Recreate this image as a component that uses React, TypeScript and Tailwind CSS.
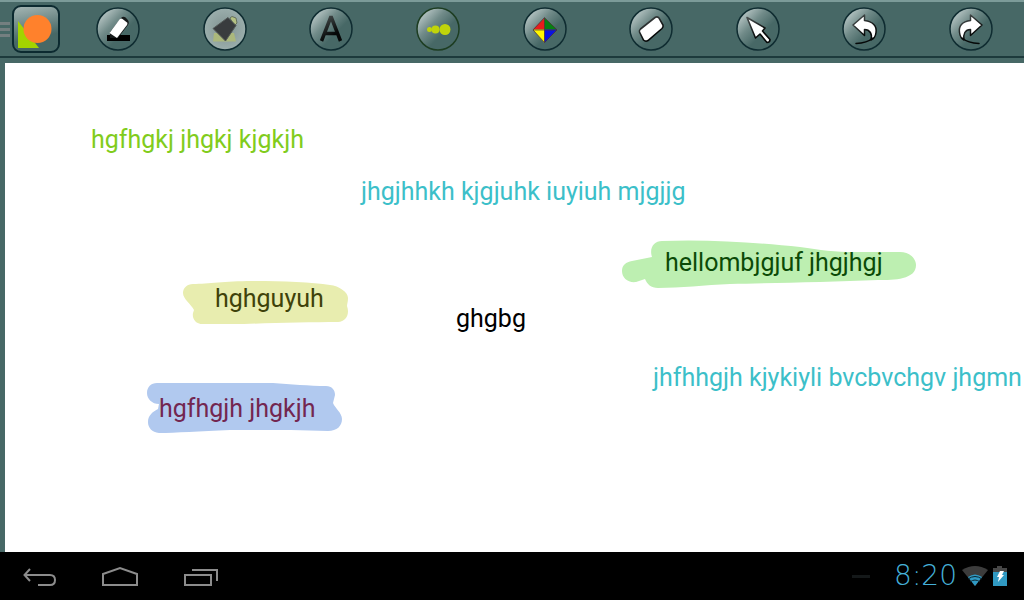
import type { ReactNode } from "react";
import clsx from "clsx";

type Tool = {
  name: string;
  ring?: string;
  muted?: boolean;
  icon: ReactNode;
};

const tools: Tool[] = [
  {
    name: "Marker",
    icon: (
      <>
        <path d="M11 28 H34 V34 H11Z" fill="#000" />
        <path d="M14 25 L25 11 Q28 8 31 12 Q34 15 32 18 L22 31 L14 31Z" fill="#161a1a" />
        <path d="M13.500 26 L23.500 12.500 Q25 11 26.500 12 L31 15.500 Q32 16.500 31 18 L21 31Z" fill="#fff" />
      </>
    ),
  },
  {
    name: "Highlighter",
    muted: true,
    icon: (
      <>
        <path d="M10 34.500 L11 26 H31 L33 34.500Z" fill="#abb87c" />
        <path d="M27 11 L29 9.500 L33 11 L34 16 L31 19Z" fill="#b4c183" stroke="#56604c" strokeWidth="0.800" />
        <path d="M10 21.500 L25 10.500 L33 18.500 L22.500 34Z" fill="#393c3e" stroke="#535a58" strokeWidth="1" strokeLinejoin="round" />
      </>
    ),
  },
  {
    name: "Text",
    icon: (
      <path
        d="M12.500 34 L22 9.500 L31.500 34 M15 26.500 H29"
        fill="none"
        stroke="url(#ink)"
        strokeWidth="3.500"
        strokeLinejoin="bevel"
      />
    ),
  },
  {
    name: "Brush size",
    ring: "#1d3d22",
    icon: (
      <g fill="#c0d40a">
        <circle cx="13.500" cy="22.500" r="2.500" />
        <circle cx="19.500" cy="22.500" r="4" />
        <circle cx="29" cy="22.500" r="5.500" />
      </g>
    ),
  },
  {
    name: "Color",
    icon: (
      <>
        <path d="M21.500 11 V22.500 H10Z" fill="#e81c1c" />
        <path d="M21.500 11 V22.500 H34Z" fill="#078013" />
        <path d="M21.500 36 V22.500 H10Z" fill="#fff600" />
        <path d="M21.500 36 V22.500 H34Z" fill="#0a12e0" />
        <path d="M21.500 10.500 L34 23 L21.500 35.500 L10 23Z M10 23 H34 M21.500 11 V35.500" fill="none" stroke="#4b3030" strokeWidth="0.700" />
      </>
    ),
  },
  {
    name: "Eraser",
    icon: (
      <path
        d="M11.500 22 L26 10.500 Q28 9 30 11 L34 18 Q34.500 20 33 21.500 L19 33.500 Q16.500 35 14.500 33 L10.500 25 Q10 23.500 11.500 22Z"
        fill="#fff"
        stroke="url(#ink)"
        strokeWidth="1.600"
      />
    ),
  },
  {
    name: "Select",
    icon: (
      <path
        d="M11 10.500 L29 21 L26.500 24 L34 32.500 Q34 35.500 31 35.500 L24 27 L19.500 31Z"
        fill="#fff"
        stroke="url(#ink)"
        strokeWidth="1.600"
        strokeLinejoin="round"
      />
    ),
  },
  {
    name: "Undo",
    icon: (
      <>
        <path
          d="M11 18 L22.500 8 V13.500 C31 14.500 35 19 34 25.500 C33.500 29.500 32 32 29 33 C30.500 27 28 22.500 22.500 22.500 V28.500Z"
          fill="#fff"
          stroke="url(#ink)"
          strokeWidth="1.500"
          strokeLinejoin="round"
        />
        <path d="M14 36.500 Q25 36 31 31" fill="none" stroke="#050808" strokeWidth="1.500" strokeLinecap="round" />
      </>
    ),
  },
  {
    name: "Redo",
    icon: (
      <>
        <path
          d="M33 18 L21.500 8 V13.500 C13 14.500 9.500 19 10.500 25.500 C11 29.500 12.500 32 15 33 C14 27 16 22.500 21.500 22.500 V28.500Z"
          fill="#fff"
          stroke="url(#ink)"
          strokeWidth="1.500"
          strokeLinejoin="round"
        />
        <path d="M30 36.500 Q19 36 13 31" fill="none" stroke="#050808" strokeWidth="1.500" strokeLinecap="round" />
      </>
    ),
  },
];

const strokes = [
  {
    id: "yellow",
    box: "left-[177px] top-[217px] h-12 w-44",
    view: "0 0 176 48",
    fill: "#e8edaf",
    d: "M1 13 C1 8 5 4 11 4 C27 4 42 1 70 1 C100 1 130 2 148 5 C157 6 166 12 166 18 C166 22 165 24 165 26 C168 34 164 42 156 42 C130 42 90 43 62 44 L21 44 C13 44 10 38 11 33 L12 30 C9 24 1 19 1 13Z",
  },
  {
    id: "blue",
    box: "left-[140px] top-[317px] h-14 w-52",
    view: "0 0 208 56",
    fill: "#b1c9ef",
    d: "M2 13 C2 7 6 3 12 3 L128 3 C145 4 165 6 181 6 C187 6 190 10 190 15 L188 23 C190 28 197 33 197 39 C197 46 192 51 183 51 C150 50 110 50 85 50 C55 51 30 53 14 53 C7 52 3 48 3 42 C3 36 7 32 13 29 L14 24 C7 24 2 19 2 13Z",
  },
  {
    id: "green",
    box: "left-[615px] top-[175px] h-13 w-75",
    view: "0 0 300 52",
    fill: "#bdefb1",
    d: "M2 33 C2 27 6 24 12 23 L32 19 C29 10 34 3 42 3 C90 1 140 5 180 9 C200 12 215 14 235 14 L280 14 C289 14 296 20 296 27 C296 34 291 38 283 40 C276 42 266 42 258 42 C210 44 150 45 110 46 C85 47 60 50 38 50 C31 50 27 46 25 41 L16 44 C8 45 2 40 2 33Z",
  },
];

const notes = [
  { text: "hgfhgkj jhgkj kjgkjh", className: "left-[86px] top-[61px] text-[#81cc1c]" },
  { text: "jhgjhhkh kjgjuhk iuyiuh mjgjjg", className: "left-[356px] top-[113px] text-[#3cbfc9]" },
  { text: "hellombjgjuf jhgjhgj", className: "left-[660px] top-[184px] text-[#0b4a07]" },
  { text: "hghguyuh", className: "left-[210px] top-[220px] text-[#3f420a]" },
  { text: "ghgbg", className: "left-[451px] top-[240px] text-black" },
  { text: "hgfhgjh jhgkjh", className: "left-[154px] top-[330px] text-[#732650]" },
  { text: "jhfhhgjh kjykiyli bvcbvchgv jhgmn", className: "left-[648px] top-[299px] text-[#3cbfc9]" },
];

function ToolButton({ tool }: { tool: Tool }) {
  return (
    <button type="button" aria-label={tool.name} className="size-11 shrink-0 cursor-pointer">
      <svg viewBox="0 0 44 44" className="size-11">
        <circle
          cx="22"
          cy="22"
          r="21"
          fill={tool.muted ? "url(#muted)" : "url(#gloss)"}
          stroke={tool.ring ?? "#0f2c31"}
          strokeWidth="1.500"
        />
        {tool.icon}
      </svg>
    </button>
  );
}

function Toolbar() {
  return (
    <header className="flex h-[58px] shrink-0 items-center border-t-2 border-b-2 border-t-[#7c9b99] border-b-[#1d3a3c] bg-[#476866]">
      <svg className="absolute size-0" aria-hidden="true">
        <defs>
          <linearGradient id="gloss" x1="0.120" y1="0.150" x2="0.600" y2="0.620">
            <stop offset="0" stopColor="#b4c3c2" />
            <stop offset="0.500" stopColor="#718b89" />
            <stop offset="1" stopColor="#476866" />
          </linearGradient>
          <radialGradient id="muted">
            <stop offset="0" stopColor="#7f9190" />
            <stop offset="1" stopColor="#9baeac" />
          </radialGradient>
          <linearGradient id="ink" gradientUnits="userSpaceOnUse" x1="12" y1="8" x2="24" y2="28">
            <stop offset="0" stopColor="#4d5454" />
            <stop offset="1" stopColor="#050808" />
          </linearGradient>
          <linearGradient id="tile" x1="0.300" y1="0" x2="0.450" y2="0.700">
            <stop offset="0" stopColor="#a0b2b0" />
            <stop offset="1" stopColor="#476866" />
          </linearGradient>
        </defs>
      </svg>
      <div className="flex w-3 flex-col gap-[3px]">
        <span className="h-[3px] w-[10px] bg-[#747f80]" />
        <span className="h-[3px] w-[10px] bg-[#747f80]" />
        <span className="h-[3px] w-[10px] bg-[#747f80]" />
      </div>
      <button type="button" aria-label="Menu" className="size-12 shrink-0 cursor-pointer">
        <svg viewBox="0 0 48 48" className="size-12">
          <rect x="1" y="1" width="46" height="46" rx="8" fill="url(#tile)" stroke="#0c2a30" strokeWidth="2" />
          <path d="M6 16 L27 43 H6Z" fill="#a3d400" />
          <circle cx="25.500" cy="24" r="14" fill="#ff812c" />
        </svg>
      </button>
      <nav aria-label="Tools" className="mr-[31px] ml-9 flex flex-1 justify-between">
        {tools.map((tool) => (
          <ToolButton key={tool.name} tool={tool} />
        ))}
      </nav>
    </header>
  );
}

function Board() {
  return (
    <main className="relative mt-[5px] ml-[5px] flex-1 overflow-hidden bg-white">
      {strokes.map((stroke) => (
        <svg key={stroke.id} viewBox={stroke.view} className={clsx("absolute", stroke.box)}>
          <path d={stroke.d} fill={stroke.fill} />
        </svg>
      ))}
      {notes.map((note) => (
        <p key={note.text} className={clsx("absolute whitespace-nowrap text-[25px] leading-8", note.className)}>
          {note.text}
        </p>
      ))}
    </main>
  );
}

function SystemBar() {
  return (
    <footer className="flex h-12 shrink-0 items-center justify-between bg-black pr-[17px] pl-5">
      <div className="flex">
        <button type="button" aria-label="Back" className="mr-10 h-12 w-10 cursor-pointer">
          <svg viewBox="0 0 40 48" className="h-12 w-10" fill="none" stroke="#8c8c8c" strokeWidth="2">
            <path d="M10 17 L4.500 23 L10 29 M5 23 H30 Q35 23 35 28 Q35 33 30 33 H18" />
          </svg>
        </button>
        <button type="button" aria-label="Home" className="mr-10 h-12 w-10 cursor-pointer">
          <svg viewBox="0 0 40 48" className="h-12 w-10" fill="none" stroke="#8c8c8c" strokeWidth="2">
            <path d="M3 33 V22 L20 16 L37 22 V33Z" />
          </svg>
        </button>
        <button type="button" aria-label="Recent apps" className="h-12 w-10 cursor-pointer">
          <svg viewBox="0 0 40 48" className="h-12 w-10" fill="none" stroke="#8c8c8c" strokeWidth="2">
            <path d="M5 23 H31 V33 H5Z M12 18 H37 V29" />
          </svg>
        </button>
      </div>
      <div className="flex items-center">
        <span className="mr-6 h-[3px] w-[18px] bg-[#141819]" />
        <time className="font-['DejaVu_Sans',sans-serif] text-[28px] leading-8 font-extralight text-[#45b0d8]">8:20</time>
        <svg viewBox="0 0 28 20" className="ml-1 h-5 w-7" aria-label="Wi-Fi">
          <path d="M1 4 Q14 -4 27 4 L14 20Z" fill="#3c3c3c" />
          <path d="M7 11 Q14 6 21 11 L14 20Z" fill="#2f9ac4" />
          <path d="M7 13 Q14 8 21 13 M9 16 Q14 12 19 16" fill="none" stroke="#0a2530" strokeWidth="1" />
        </svg>
        <svg viewBox="0 0 14 20" className="ml-1 h-5 w-[14px]" aria-label="Battery charging">
          <path d="M0 2 H4 V0 H9 V2 H14 V6 H0Z" fill="#474747" />
          <rect y="6" width="14" height="14" fill="#3099c2" />
          <path d="M7 5 L11 5 L9 9 H11 L5 16 L6 11 H4Z" fill="#fff" />
        </svg>
      </div>
    </footer>
  );
}

export default function App() {
  return (
    <div className="flex h-screen flex-col overflow-hidden bg-[#476866] font-[Roboto,sans-serif]">
      <Toolbar />
      <Board />
      <SystemBar />
    </div>
  );
}
